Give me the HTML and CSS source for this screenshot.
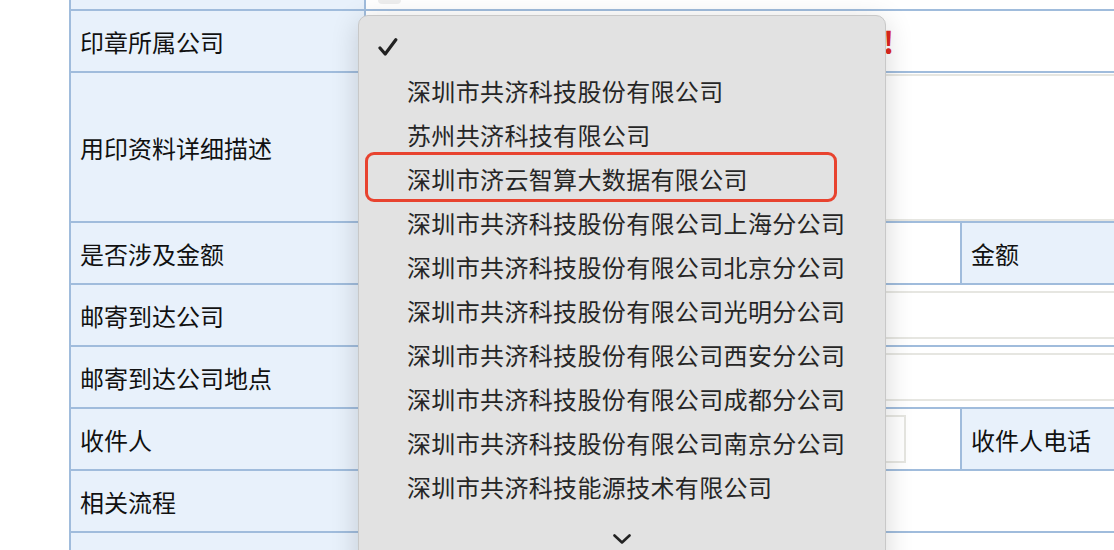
FILE: index.html
```html
<!DOCTYPE html>
<html lang="zh-CN">
<head>
    <meta charset="UTF-8">
    <meta name="viewport" content="width=device-width, initial-scale=1.0">
    <title>用印申请</title>
    <link rel="stylesheet" href="styles.css">
</head>
<body>
    <!-- 表单 -->
    <table class="form">
        <colgroup>
            <col class="col-label">
            <col class="col-value">
            <col class="col-label2">
            <col class="col-value2">
        </colgroup>
        <tr>
            <td class="label"></td>
            <td class="value" colspan="3"><span class="mini-btn"></span></td>
        </tr>
        <tr>
            <td class="label">印章所属公司</td>
            <td class="value" colspan="3">
                <select class="select"><option></option></select><span class="required">!</span>
            </td>
        </tr>
        <tr class="tall">
            <td class="label">用印资料详细描述</td>
            <td class="value" colspan="3"><textarea class="area"></textarea></td>
        </tr>
        <tr>
            <td class="label">是否涉及金额</td>
            <td class="value"></td>
            <td class="label">金额</td>
            <td class="value"></td>
        </tr>
        <tr>
            <td class="label">邮寄到达公司</td>
            <td class="value" colspan="3"><input class="field wide" type="text"></td>
        </tr>
        <tr>
            <td class="label">邮寄到达公司地点</td>
            <td class="value" colspan="3"><input class="field wide" type="text"></td>
        </tr>
        <tr>
            <td class="label">收件人</td>
            <td class="value"><input class="field short" type="text"></td>
            <td class="label">收件人电话</td>
            <td class="value"></td>
        </tr>
        <tr>
            <td class="label">相关流程</td>
            <td class="value" colspan="3"></td>
        </tr>
        <tr>
            <td class="label"></td>
            <td class="value" colspan="3"></td>
        </tr>
    </table>

    <!-- 下拉菜单 -->
    <div class="menu">
        <div class="menu-item check-row">
            <svg class="check" width="20" height="20" viewBox="0 0 20 20">
                <path d="M2 11 L7.2 17 L17.8 2.8" fill="none" stroke="#222" stroke-width="3.2" stroke-linecap="round" stroke-linejoin="round"/>
            </svg>
        </div>
        <div class="menu-item">深圳市共济科技股份有限公司</div>
        <div class="menu-item">苏州共济科技有限公司</div>
        <div class="menu-item marked">深圳市济云智算大数据有限公司</div>
        <div class="menu-item">深圳市共济科技股份有限公司上海分公司</div>
        <div class="menu-item">深圳市共济科技股份有限公司北京分公司</div>
        <div class="menu-item">深圳市共济科技股份有限公司光明分公司</div>
        <div class="menu-item">深圳市共济科技股份有限公司西安分公司</div>
        <div class="menu-item">深圳市共济科技股份有限公司成都分公司</div>
        <div class="menu-item">深圳市共济科技股份有限公司南京分公司</div>
        <div class="menu-item">深圳市共济科技能源技术有限公司</div>
        <div class="menu-more">
            <svg width="18" height="10" viewBox="0 0 18 10">
                <path d="M1.5 1.5 L9 8.5 L16.5 1.5" fill="none" stroke="#222" stroke-width="2.6" stroke-linecap="round" stroke-linejoin="round"/>
            </svg>
        </div>
    </div>
</body>
</html>
```

FILE: styles.css
```css
/* 全局 */
body {
    margin: 0;
    padding: 0;
    background: #fff;
    overflow: hidden;
    font-family: "Noto Sans CJK SC", "Noto Sans", sans-serif;
    color: #111;
}

/* 表单表格 */
.form {
    margin: -53px 0 0 69px;
    width: 1391px;
    table-layout: fixed;
    border-collapse: collapse;
}

.col-label { width: 295px; }
.col-value { width: 596px; }
.col-label2 { width: 200px; }
.col-value2 { width: 300px; }

.form td {
    height: 60px;
    padding: 0;
    border: 2px solid #a0bcdc;
    vertical-align: middle;
}

.form tr.tall td {
    height: 148px;
}

.form .label {
    background: #e8f1fb;
    padding-left: 9px;
    font-size: 24px;
    white-space: nowrap;
}

.form .value {
    background: #fff;
    padding-left: 10px;
}

.mini-btn {
    display: inline-block;
    width: 23px;
    height: 50px;
    margin-left: 2px;
    vertical-align: top;
    background: #eee;
    border-radius: 0 0 4px 4px;
}

.select {
    width: 497px;
    height: 40px;
    vertical-align: middle;
}

.required {
    margin-left: 10px;
    color: #e0281e;
    font-weight: bold;
    font-size: 30px;
    vertical-align: middle;
}

.area {
    display: block;
    box-sizing: border-box;
    width: 100%;
    height: 147px;
    margin: 1px 0 0;
    border: 2px solid #e6e6e1;
    resize: none;
}

.field {
    display: block;
    box-sizing: border-box;
    height: 48px;
    border: 2px solid #e6e6e1;
    background: #fff;
}

.field.wide {
    width: 100%;
}

.field.short {
    width: 530px;
}

/* 下拉菜单 */
.menu {
    position: absolute;
    left: 358px;
    top: 15px;
    width: 528px;
    height: 560px;
    box-sizing: border-box;
    padding-top: 9px;
    background: #e2e2e2;
    border: 1px solid #c8c8c8;
    border-radius: 10px;
    box-shadow: 0 6px 28px rgba(0, 0, 0, 0.16);
    color: #262626;
}

.menu-item {
    position: relative;
    height: 44px;
    line-height: 44px;
    padding-left: 48px;
    font-size: 24px;
    letter-spacing: 0.35px;
    white-space: nowrap;
}

.check-row {
    display: flex;
    align-items: center;
    padding-left: 19px;
}

.menu-item.marked::after {
    content: "";
    position: absolute;
    left: 6px;
    top: -5px;
    width: 472px;
    height: 50px;
    box-sizing: border-box;
    border: 3px solid #e8432f;
    border-radius: 9px;
}

.menu-more {
    display: flex;
    justify-content: center;
    padding-top: 25px;
}
```
